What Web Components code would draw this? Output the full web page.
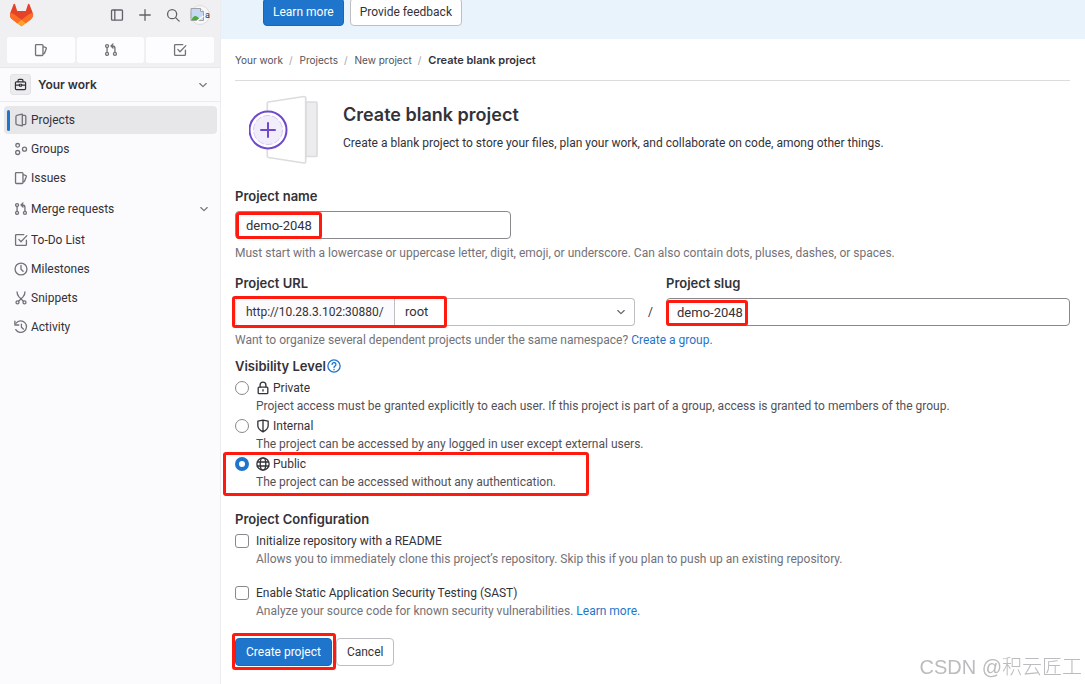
<!DOCTYPE html>
<html lang="en">
<head>
<meta charset="utf-8">
<title>Create blank project</title>
<meta name="viewport" content="width=device-width, initial-scale=1">
<style>
  html, body { margin: 0; min-height: 100%; }
  body {
    --text: #333238; --muted: #737278; --blue: #1f75cb; --line: #dcdcde; --field: #89888d; --red: #ff1a0f;
    --display: Inter, "Noto Sans", sans-serif;
    font: 12px/16px Roboto, "Noto Sans", sans-serif; color: var(--text); background: #fff; overflow: hidden;
  }
</style>
</head>
<body>
<app-shell>
  <side-bar slot="side"></side-bar>
  <top-banner></top-banner>
  <bread-crumbs></bread-crumbs>
  <project-intro></project-intro>
  <project-form></project-form>
</app-shell>
<water-mark>CSDN @积云匠工</water-mark>

<script>
const icons = {
  sidebar: '<rect x="1.75" y="2.25" width="12.5" height="11.5" rx="1"/><path d="M5.5 2.5v11"/>',
  plus: '<path d="M8 2v12M2 8h12"/>',
  search: '<circle cx="7" cy="7" r="5.2"/><path d="M11 11l4 4"/>',
  issues: '<path d="M2.75 1.75h6.5a1 1 0 0 1 1 1v10.5a1 1 0 0 1-1 1h-6.5a1 1 0 0 1-1-1V2.75a1 1 0 0 1 1-1zM10.5 4l3.1 1.2a.9.9 0 0 1 .5 1.1L12 11.8l-1.5 1"/>',
  merge: '<circle cx="3.5" cy="3.5" r="1.7"/><circle cx="3.5" cy="12.5" r="1.7"/><circle cx="12.5" cy="12.5" r="1.7"/><path d="M3.5 5.3v5.4M12.5 10.7V6a2.6 2.6 0 0 0-2.6-2.6H8.2M10.3 1L8 3.4l2.3 2.4"/>',
  todo: '<path d="M14.2 8.2v5a1 1 0 0 1-1 1H2.8a1 1 0 0 1-1-1V2.8a1 1 0 0 1 1-1h8.4M5.5 7.3L8 10l6.7-7"/>',
  work: '<rect x="1.75" y="4.75" width="12.5" height="9.5" rx="1.2"/><path d="M5 4.5V3.2a1.4 1.4 0 0 1 1.4-1.4h3.2A1.4 1.4 0 0 1 11 3.2v1.3M2 8.7h4.5M9.5 8.7H14"/><rect x="6.6" y="7.7" width="2.8" height="2.4" rx=".5"/>',
  down: '<path d="M3.7 6L8 10.2 12.3 6"/>',
  project: '<path d="M9.5 1.2L4 2.4a2 2 0 0 0-1.8 2v7.2a2 2 0 0 0 1.8 2l5.5 1.2zM9.7 2.8h2.5a1.3 1.3 0 0 1 1.3 1.3v7.8a1.3 1.3 0 0 1-1.3 1.3H9.7"/>',
  group: '<circle cx="4.2" cy="3.8" r="2.1"/><circle cx="4.2" cy="12" r="2.3"/><circle cx="12" cy="8.2" r="2.3"/>',
  clock: '<circle cx="8" cy="8" r="6.8"/><path d="M8 4v4.2l2.4 2.3"/>',
  snippet: '<path d="M3.5 1c0 2.5.7 4 2.2 5.7l5 5M12.5 1c0 2.5-.7 4-2.2 5.7l-5 5"/><circle cx="4" cy="13" r="1.7"/><circle cx="12" cy="13" r="1.7"/>',
  history: '<path d="M2.5 3.5A6.6 6.6 0 1 1 2 11M1 1.2v4.5h4.5M8.5 4.7v3.6l2.2 2"/>',
  help: '<circle cx="8" cy="8" r="7"/><path d="M5.8 6.2a2.2 2.2 0 1 1 3.3 1.9C8.3 8.6 8 8.9 8 9.7"/><path d="M8 11.8v.4"/>',
  lock: '<rect x="2.5" y="7" width="11" height="7.5" rx="1"/><path d="M4.7 6.8V4.5a3.3 3.3 0 0 1 6.6 0v2.3M8 10v1.5"/>',
  shield: '<path d="M8 1.2l5.9 1.3v5.3c0 3-2.4 5.2-5.9 7-3.5-1.8-5.9-4-5.9-7V2.5zM8 1.2v13.6"/>',
  globe: '<circle cx="8" cy="8" r="7"/><ellipse cx="8" cy="8" rx="3.2" ry="7"/><path d="M1.5 5.7h13M1.5 10.3h13"/>'
};

function define(name, render) {
  customElements.define(name, class extends HTMLElement {
    constructor() { super(); this.attachShadow({ mode: "open" }); }
    connectedCallback() { this.shadowRoot.innerHTML = render(this); }
  });
}

define("gl-icon", el => `
  <style>:host{display:block;flex:none;width:14px;height:14px}svg{display:block;width:100%;height:100%;fill:none;stroke:currentColor;stroke-width:1.5;stroke-linecap:round;stroke-linejoin:round}</style>
  <svg viewBox="0 0 16 16" aria-hidden="true">${icons[el.getAttribute("name")]}</svg>`);

define("mark-box", () => `
  <style>:host{position:absolute;inset:var(--mark-inset,0);width:var(--mark-width,auto);border:3px solid var(--red);border-radius:3px;box-sizing:border-box;pointer-events:none}</style>`);

define("water-mark", () => `
  <style>:host{position:fixed;right:3px;bottom:4px;font:300 20px/26px "Liberation Sans","Noto Sans CJK SC",sans-serif;color:#bcbcbf;pointer-events:none;white-space:nowrap}</style><slot></slot>`);

define("app-shell", () => `
  <style>
    :host{display:flex;min-height:100vh}
    aside{flex:none;width:220px;background:#fbfafd;border-right:1px solid #ececef}
    main{flex:1;min-width:0}
  </style>
  <aside><slot name="side"></slot></aside><main><slot></slot></main>`);

define("gl-button", el => `
  <style>
    :host{display:block}
    button{display:block;font:inherit;height:28px;padding:0 var(--button-pad,10px);border-radius:4px;border:1px solid #bfbfc3;background:#fff;color:var(--text);white-space:nowrap}
    button.confirm{background:var(--blue);border-color:#1068bf;color:#fff}
  </style>
  <button type="button" class="${el.getAttribute("variant") || ""}"><slot></slot></button>`);

define("nav-item", el => `
  <style>
    :host{display:block}
    a{display:flex;align-items:center;gap:3px;height:28px;padding:0 7px 0 3px;border-radius:4px;color:inherit;text-decoration:none}
    a::before{content:"";width:3px;height:21px;border-radius:2px;margin-right:1px}
    a.active{background:#e7e7ea} a.active::before{background:var(--blue)}
    a.more{height:32px}
    gl-icon{color:#737278} span{flex:1} gl-icon.end{width:12px;height:12px}
  </style>
  <a href="#" class="${el.hasAttribute("active") ? "active" : ""} ${el.hasAttribute("more") ? "more" : ""}"><gl-icon name="${el.getAttribute("icon")}"></gl-icon><span><slot></slot></span>${el.hasAttribute("more") ? '<gl-icon class="end" name="down"></gl-icon>' : ""}</a>`);

define("side-bar", () => `
  <style>
    :host{display:block}
    header{background:#f0f0f3;border-bottom:1px solid #e6e6e9;height:68px;box-sizing:border-box}
    .top{display:flex;align-items:center;gap:14px;height:30px;padding:0 10px;color:#626168}
    .top a{display:block;margin-right:auto} .top a svg{display:block}
    .top button{all:unset;display:block}
    .top .avatar{display:flex;width:20px;height:20px;margin-left:-4px}
    .counts{display:flex;gap:2px;padding:7px 6px 0 7px}
    .counts a{flex:1;display:flex;justify-content:center;align-items:center;height:26px;background:#fdfcfe;border-radius:3px;color:#737278}
    .context{all:unset;box-sizing:border-box;width:100%;display:flex;align-items:center;gap:7px;height:34px;padding:0 11px 0 10px;border-bottom:1px solid #ececef;font-family:var(--display);font-weight:600;line-height:16px}
    .context i{display:flex;align-items:center;justify-content:center;box-sizing:border-box;width:21px;height:21px;border-radius:3px;background:#ececef;border:1px solid #e2e2e5}
    .context i gl-icon{width:13px;height:13px}
    .context span{flex:1} .context .end{width:12px;height:12px;color:#737278}
    nav{display:flex;flex-direction:column;gap:1px;padding:4px 3px 4px 4px}
  </style>
  <header>
    <div class="top">
      <a href="#" aria-label="Home"><svg width="24" height="24" viewBox="0 0 24 24">
        <path fill="#e24329" d="M22.7 9.7l-.1-.1L19.5 1.4a.8.8 0 0 0-1.6.1l-2.1 6.5H7.2L5.1 1.5a.8.8 0 0 0-1.6-.1L.4 9.6A6 6 0 0 0 2.4 16.5L11.5 23l9.2-6.5a6 6 0 0 0 2-6.8z"/>
        <path fill="#fc6d26" d="M22.7 9.7A10.6 10.6 0 0 0 18.5 11.6L11.5 16.8l4.5 3.5 4.7-3.8a6 6 0 0 0 2-6.8zM.4 9.7A10.6 10.6 0 0 1 4.6 11.6l6.9 5.2L7 20.3l-4.6-3.8a6 6 0 0 1-2-6.8z"/>
        <path fill="#fca326" d="M7 20.2l4.5-3.4 4.5 3.4L11.5 23.5z"/></svg></a>
      <button aria-label="Toggle sidebar"><gl-icon name="sidebar"></gl-icon></button>
      <button aria-label="Create new"><gl-icon name="plus"></gl-icon></button>
      <button aria-label="Search"><gl-icon name="search"></gl-icon></button>
      <button class="avatar" aria-label="User menu"><svg width="20" height="20" viewBox="0 0 20 20">
        <circle cx="10" cy="10" r="9.5" fill="#f7f7f8" stroke="#dddde0"/>
        <path d="M1 3.5h9.5l3 3v9H1z" fill="#c5d9f5" stroke="#a1a1a6"/><path d="M10.5 3.5v3h3" fill="#fff" stroke="#a1a1a6"/>
        <path d="M1.5 15c2-5 5-5 8-1l-2 1z" fill="#4daa3a"/><path d="M7 16l6.5-5" stroke="#fff" stroke-width="1.5"/>
        <text x="15" y="13" font-size="9" fill="#333238">a</text></svg></button>
    </div>
    <div class="counts">
      <a href="#" aria-label="Issues"><gl-icon name="issues"></gl-icon></a>
      <a href="#" aria-label="Merge requests"><gl-icon name="merge"></gl-icon></a>
      <a href="#" aria-label="To-Do"><gl-icon name="todo"></gl-icon></a>
    </div>
  </header>
  <button class="context"><i><gl-icon name="work"></gl-icon></i><span>Your work</span><gl-icon class="end" name="down"></gl-icon></button>
  <nav>
    <nav-item icon="project" active>Projects</nav-item>
    <nav-item icon="group">Groups</nav-item>
    <nav-item icon="issues">Issues</nav-item>
    <nav-item icon="merge" more>Merge requests</nav-item>
    <nav-item icon="todo">To-Do List</nav-item>
    <nav-item icon="clock">Milestones</nav-item>
    <nav-item icon="snippet">Snippets</nav-item>
    <nav-item icon="history">Activity</nav-item>
  </nav>`);

define("top-banner", () => `
  <style>:host{--button-pad:9px;display:flex;gap:6px;align-items:flex-end;height:39px;box-sizing:border-box;padding:0 42px 13px;background:#e9f3fc}</style>
  <gl-button variant="confirm">Learn more</gl-button><gl-button>Provide feedback</gl-button>`);

define("bread-crumbs", () => `
  <style>
    :host{display:block;padding:0 15px 0 14px}
    ol{display:flex;list-style:none;margin:0;padding:0;height:41px;align-items:center;border-bottom:1px solid var(--line);font-family:var(--display);font-size:10px}
    li+li::before{content:"/";color:#a4a3a8;margin:0 7px 0 6px}
    a{color:#535158;text-decoration:none} [aria-current]{color:var(--text);font-weight:600;font-size:11px}
  </style>
  <nav aria-label="Breadcrumb"><ol><li><a href="#">Your work</a></li><li><a href="#">Projects</a></li><li><a href="#">New project</a></li><li><a href="#" aria-current="page">Create blank project</a></li></ol></nav>`);

define("project-intro", () => `
  <style>
    :host{display:flex;gap:22px;padding:14px 15px 0 28px}
    svg{flex:none;display:block}
    h1{font-family:var(--display);font-size:18px;line-height:24px;font-weight:600;margin:8px 0 8px} p{margin:0}
  </style>
  <svg width="72" height="70" viewBox="0 0 72 70" fill="none" stroke="#dcdcde" stroke-width="1.7" stroke-linejoin="round">
    <path d="M57 7h10a1 1 0 0 1 1 1v52.5a1 1 0 0 1-1 1H57z" fill="#ececef"/>
    <path d="M19.5 7L55 1.5a1.5 1.5 0 0 1 1.7 1.5v63.5a1.5 1.5 0 0 1-1.7 1.5L19.5 62.5a1.5 1.5 0 0 1-1.2-1.5V8.5a1.5 1.5 0 0 1 1.2-1.5z" fill="#fff"/>
    <circle cx="19" cy="35" r="18.5" fill="#fff" stroke="#6e49cb" stroke-width="2"/>
    <circle cx="19" cy="35" r="14.5" fill="#f1edfb" stroke="#d5caf2" stroke-width="1" stroke-dasharray="7 2"/>
    <path d="M19 28v14M12 35h14" stroke="#6e49cb" stroke-width="2" stroke-linecap="round"/>
  </svg>
  <div><h1>Create blank project</h1><p>Create a blank project to store your files, plan your work, and collaborate on code, among other things.</p></div>`);

define("choice-option", el => `
  <style>
    :host{display:grid;grid-template-columns:14px 1fr;column-gap:7px;row-gap:2px;position:relative}
    input{appearance:none;box-sizing:border-box;width:14px;height:14px;margin:1px 0;border:1px solid var(--field);background:#fff}
    input[type=radio]{border-radius:50%} input[type=checkbox]{border-radius:3px}
    input:checked{border:4px solid var(--blue)}
    label{display:flex;align-items:center;gap:3px} gl-icon{width:14px;height:14px}
    p{grid-column:2;margin:0;color:var(--desc,#535158)}
  </style>
  <input id="c" type="${el.getAttribute("type")}" name="choice" ${el.hasAttribute("checked") ? "checked" : ""}>
  <label for="c">${el.hasAttribute("icon") ? `<gl-icon name="${el.getAttribute("icon")}"></gl-icon>` : ""}<slot name="label"></slot></label>
  <p><slot></slot></p><slot name="mark"></slot>`);

define("project-form", () => `
  <style>
    :host{display:block;padding:23px 15px 12px 14px}
    form{display:flex;flex-direction:column}
    label.name,h2,.legend{display:block;font-family:var(--display);font-size:13px;line-height:16px;font-weight:600;margin:0}
    .hint{margin:6px 0 0;color:var(--muted)} a{color:var(--blue);text-decoration:none}
    input,select{box-sizing:border-box;width:100%;height:28px;font:inherit;font-size:13px;color:inherit;border:1px solid var(--field);border-radius:4px;padding:0 10px;background:#fff;appearance:none;display:block}
    .box{position:relative;margin-top:7px}
    .half{width:33%;min-width:240px}
    .row{display:grid;grid-template-columns:400fr 31px 404fr;margin-top:14px}
    .slash{align-self:end;line-height:28px;text-align:center}
    .group{display:flex}
    .prefix{box-sizing:border-box;flex:none;width:160px;height:28px;line-height:26px;padding:0 10px;border:1px solid var(--line);border-right-color:#bfbfc3;border-radius:4px 0 0 4px;background:#fbfafd}
    .pick{position:relative;flex:1} .pick select{border-left:0;border-color:#bfbfc3;border-radius:0 4px 4px 0}
    .pick gl-icon{position:absolute;right:8px;top:8px;width:12px;height:12px;color:#626168;pointer-events:none}
    fieldset{border:0;margin:10px 0 0;padding:0;min-width:0;display:flex;flex-direction:column;gap:4px}
    .legend{display:flex;align-items:center;gap:1px;margin-bottom:2px} .legend gl-icon{color:var(--blue)}
    section{margin-top:21px;display:flex;flex-direction:column;gap:18px;--desc:#737278} section h2{margin-bottom:-12px}
    .actions{display:flex;gap:4px;margin-top:19px} .actions div{position:relative}
    #m1{--mark-inset:1px auto 0 1px;--mark-width:86px}
    #m2{--mark-inset:-2px auto -2px -3px;--mark-width:215px}
    #m3{--mark-inset:2px auto 0 0;--mark-width:82px}
    #m4{--mark-inset:-4px auto -6px -12px;--mark-width:366px}
    #m5{--mark-inset:-5px -4px -4px -3px}
  </style>
  <form>
    <label class="name" for="pname">Project name</label>
    <div class="box half"><input id="pname" value="demo-2048"><mark-box id="m1"></mark-box></div>
    <p class="hint">Must start with a lowercase or uppercase letter, digit, emoji, or underscore. Can also contain dots, pluses, dashes, or spaces.</p>
    <div class="row">
      <div><label class="name" for="ns">Project URL</label>
        <div class="box group"><span class="prefix">http://10.28.3.102:30880/</span><span class="pick"><select id="ns"><option>root</option></select><gl-icon name="down"></gl-icon></span><mark-box id="m2"></mark-box></div></div>
      <span class="slash">/</span>
      <div><label class="name" for="slug">Project slug</label><div class="box"><input id="slug" value="demo-2048"><mark-box id="m3"></mark-box></div></div>
    </div>
    <p class="hint">Want to organize several dependent projects under the same namespace? <a href="#">Create a group.</a></p>
    <fieldset aria-labelledby="vis">
      <div class="legend" id="vis">Visibility Level<gl-icon name="help"></gl-icon></div>
      <choice-option type="radio" icon="lock"><span slot="label">Private</span>Project access must be granted explicitly to each user. If this project is part of a group, access is granted to members of the group.</choice-option>
      <choice-option type="radio" icon="shield"><span slot="label">Internal</span>The project can be accessed by any logged in user except external users.</choice-option>
      <choice-option type="radio" icon="globe" checked><span slot="label">Public</span>The project can be accessed without any authentication.<mark-box id="m4" slot="mark"></mark-box></choice-option>
    </fieldset>
    <section>
      <h2>Project Configuration</h2>
      <choice-option type="checkbox"><span slot="label">Initialize repository with a README</span>Allows you to immediately clone this project’s repository. Skip this if you plan to push up an existing repository.</choice-option>
      <choice-option type="checkbox"><span slot="label">Enable Static Application Security Testing (SAST)</span>Analyze your source code for known security vulnerabilities. <a href="#">Learn more.</a></choice-option>
    </section>
    <div class="actions"><div><gl-button variant="confirm">Create project</gl-button><mark-box id="m5"></mark-box></div><gl-button>Cancel</gl-button></div>
  </form>`);
</script>
</body>
</html>
